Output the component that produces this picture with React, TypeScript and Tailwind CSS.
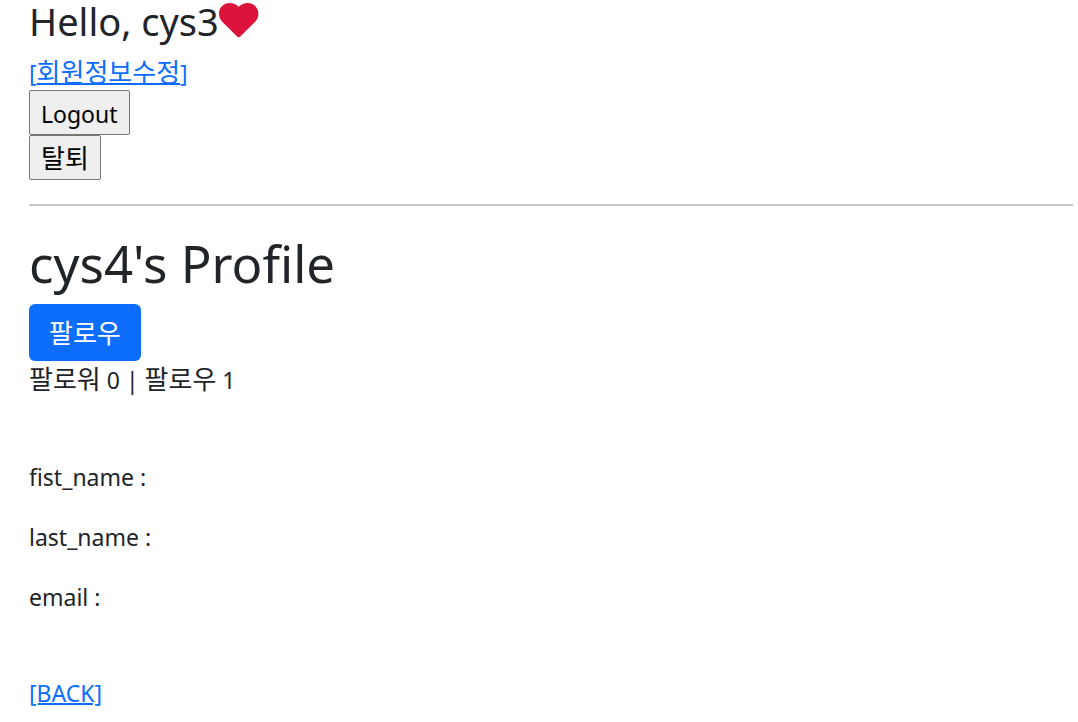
const fields = ["fist_name :", "last_name :", "email :"];

function Heart() {
  return (
    <svg viewBox="0 0 40 36" className="mt-[3px] h-9 w-10 shrink-0 fill-[#dc143c]" aria-hidden="true">
      <path d="M19.7 3.8C16.7.9 13.7 0 10.7 0 4.7 0 0 4.6 0 10.5c0 3.5 1.2 6.1 3.4 8.4l14.7 14.5q1.6 1.5 3.2 0L36 18.9c2.2-2.3 3.4-4.9 3.4-8.4C39.4 4.6 34.7 0 28.7 0c-3 0-6 .9-9 3.8Z" />
    </svg>
  );
}

export default function App() {
  return (
    <main className="pl-[29px] pr-[5px] pb-3 font-['Noto_Sans','Noto_Sans_CJK_KR',sans-serif] text-[23px] leading-9 text-[#212529]">
      <h3 className="flex h-[54px] items-start text-[38px] leading-[42px]">
        Hello, cys3
        <Heart />
      </h3>
      <a href="#edit" className="block h-9 w-fit text-[#0d6efd] underline decoration-2">[<span className="text-[26px]">회원정보수정</span>]</a>
      <form onSubmit={(e) => e.preventDefault()}>
        <button className="block h-[45px] rounded-[2px] border border-[#767676] bg-[#efefef] px-[11px] pt-0.5 text-black">Logout</button>
        <button className="block h-[45px] rounded-[2px] border border-[#767676] bg-[#efefef] px-[11px] text-[26px] text-black">탈퇴</button>
      </form>
      <hr className="my-6 border-t-2 border-[#c8c9ca]" />
      <h1 className="mb-2 text-[51px] leading-[66px]">cys4's Profile</h1>
      <button className="block h-[57px] rounded-md bg-[#0d6efd] px-5 text-[26px] text-white">팔로우</button>
      <p className="h-9 whitespace-pre"><span className="text-[26px]">팔로워</span> 0 | <span className="text-[26px]">팔로우</span> 1</p>
      <div className="mt-[62px] mb-[60px] flex flex-col gap-6">
        {fields.map((field) => <p key={field}>{field}</p>)}
      </div>
      <a href="#back" className="block w-fit text-[#0d6efd] underline decoration-2">[BACK]</a>
    </main>
  );
}
